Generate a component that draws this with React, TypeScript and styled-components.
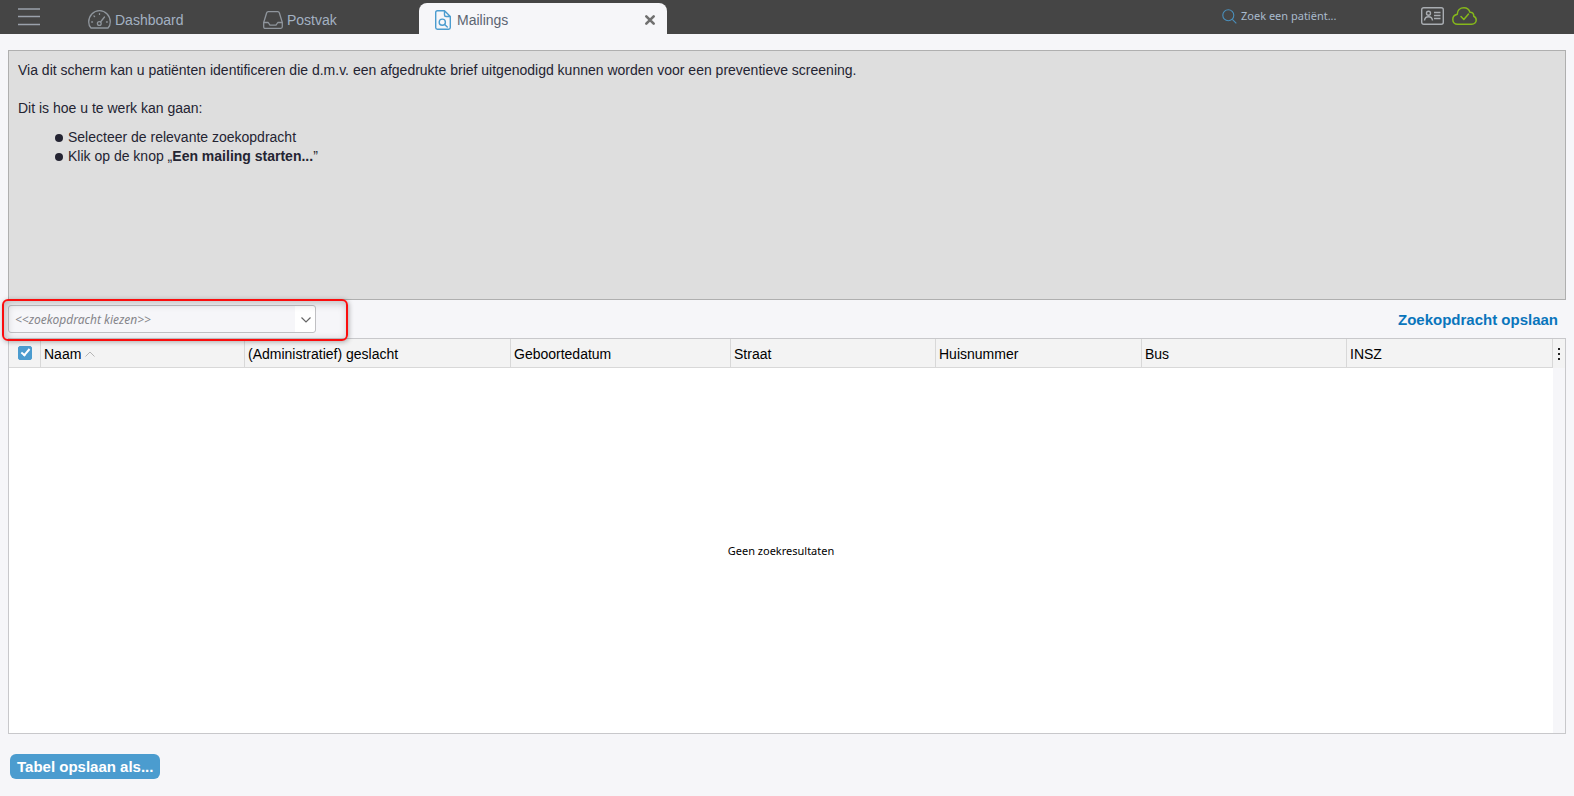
import React, { useState } from "react";
import styled, { createGlobalStyle, css } from "styled-components";

const sans = '"Liberation Sans", Arial, sans-serif';
const humanist = '"Noto Sans", "Segoe UI", sans-serif';

const GlobalStyle = createGlobalStyle`
  *, *::before, *::after { box-sizing: border-box; }
  body { margin: 0; background: #f6f6f9; font-family: ${sans}; }
  button, input, select { font: inherit; color: inherit; margin: 0; }
`;

const Page = styled.div`
  min-height: 100vh;
  display: flex;
  flex-direction: column;
`;

const TopBar = styled.header`
  height: 34px;
  display: flex;
  align-items: flex-start;
  background: #454545;
  padding-left: 18px;
`;

const BareButton = styled.button`
  display: flex;
  padding: 0;
  border: 0;
  background: none;
  cursor: pointer;
`;

const MenuButton = styled(BareButton)`
  padding-top: 8px;
  color: #9aa1ab;
`;

const Tabs = styled.nav`
  display: flex;
  align-self: stretch;
  align-items: flex-end;
  padding-left: 29px;
`;

const Tab = styled.div<{ $active?: boolean }>`
  display: flex;
  align-items: center;
  justify-content: space-between;
  height: 31px;
  width: 175px;
  padding: 2px 0 0 19px;
  color: #a3b1c2;
  ${(p) =>
    p.$active &&
    css`
      width: 248px;
      padding: 2px 11px 0 16px;
      border-radius: 8px 8px 0 0;
      background: #f6f6f9;
      color: #5b6472;
    `}
`;

const TabLink = styled.a<{ $gap: number }>`
  display: flex;
  align-items: center;
  gap: ${(p) => p.$gap}px;
  color: inherit;
  font-size: 14px;
  line-height: 20px;
  text-decoration: none;
`;

const Tools = styled.div`
  display: flex;
  gap: 8px;
  margin-left: auto;
  padding: 7px 97px 0 0;
`;

const Search = styled.label`
  display: flex;
  align-items: center;
  gap: 4px;
  width: 191px;
  height: 18px;
  color: #4a90bd;
`;

const SearchInput = styled.input`
  flex: 1;
  min-width: 0;
  padding: 0;
  border: 0;
  outline: 0;
  background: none;
  font-family: ${humanist};
  font-size: 11px;
  line-height: 18px;
  color: #a9bacd;
  &::placeholder { color: #a9bacd; opacity: 1; }
`;

const Content = styled.main`
  flex: 1;
  display: flex;
  flex-direction: column;
  padding: 16px 8px 17px;
`;

const Info = styled.section`
  min-height: 250px;
  padding: 10px 9px;
  border: 1px solid #afafaf;
  background: #dedede;
  color: #242432;
  font-size: 14px;
  line-height: 19px;
`;

const Paragraph = styled.p`
  margin: 0 0 19px;
`;

const Steps = styled.ul`
  margin: -9px 0 0;
  padding: 0 0 0 37px;
  list-style: none;
`;

const Step = styled.li`
  display: flex;
  align-items: center;
  gap: 5px;
  &::before {
    content: "";
    width: 8px;
    height: 8px;
    border-radius: 50%;
    background: #242432;
  }
`;

const QueryBar = styled.div`
  display: flex;
  align-items: center;
  justify-content: space-between;
  height: 38px;
  padding-right: 8px;
`;

const Picker = styled.div`
  position: relative;
  width: 308px;
  height: 28px;
`;

const Highlight = styled.div`
  position: absolute;
  inset: -6px -32px -8px -6px;
  border: 2px solid #fb0d0d;
  border-radius: 6px;
  box-shadow: 1px 1px 5px rgba(0, 0, 0, 0.3), inset 2px 2px 8px rgba(0, 0, 0, 0.25);
  pointer-events: none;
  z-index: 1;
`;

const Select = styled.select`
  appearance: none;
  width: 100%;
  height: 100%;
  padding: 0 28px 0 6px;
  border: 1px solid #c0c0c3;
  border-radius: 3px;
  background: linear-gradient(#fff, #fff) right / 20px 100% no-repeat #f6f6f9;
  color: #85858a;
  font-family: ${humanist};
  font-size: 12px;
  font-style: italic;
`;

const SelectArrow = styled.svg`
  position: absolute;
  top: 12px;
  right: 5px;
  pointer-events: none;
`;

const SaveQuery = styled(BareButton)`
  padding-top: 2px;
  color: #0a75bc;
  font-size: 15px;
  font-weight: bold;
  line-height: 20px;
`;

const TableFrame = styled.div`
  flex: 1;
  display: grid;
  grid-template-columns: minmax(0, 1fr) 12px;
  min-height: 396px;
  border: 1px solid #c8c8cb;
  background: #fff;
`;

const Table = styled.table`
  width: 100%;
  height: 100%;
  table-layout: fixed;
  border-collapse: separate;
  border-spacing: 0;
`;

const HeadCell = styled.th<{ $center?: boolean }>`
  height: 29px;
  padding: ${(p) => (p.$center ? "0" : "2px 3px 0")};
  border-right: 1px solid #d8d8d8;
  border-bottom: 1px solid #d8d8d8;
  background: #f3f3f3;
  color: #000;
  font-size: 14px;
  font-weight: normal;
  line-height: 20px;
  text-align: left;
  white-space: nowrap;
`;

const SortLabel = styled.span`
  display: flex;
  align-items: center;
  gap: 4px;
`;

const Checkbox = styled.input`
  appearance: none;
  display: block;
  width: 14px;
  height: 14px;
  margin: 0 0 0 9px;
  border-radius: 2px;
  border: 1px solid #4b9ccf;
  background: #fff;
  &:checked {
    background: #4b9ccf;
  }
  &:checked::after {
    content: "";
    display: block;
    width: 5px;
    height: 9px;
    margin: 0 0 0 4px;
    border: solid #fff;
    border-width: 0 2px 2px 0;
    transform: rotate(40deg);
  }
`;

const EmptyCell = styled.td`
  padding: 0;
  font-family: ${humanist};
  font-size: 11px;
  line-height: 16px;
  text-align: center;
  color: #000;
`;

const Gutter = styled.div`
  background: #f6f6f9;
`;

const ColumnMenu = styled(BareButton)`
  width: 100%;
  height: 29px;
  align-items: center;
  justify-content: center;
  background: #f3f3f3;
`;

const Footer = styled.footer`
  display: flex;
  padding: 20px 2px 0;
`;

const PrimaryButton = styled.button`
  height: 25px;
  padding: 0 7px;
  border: 0;
  border-radius: 6px;
  background: #4b9ccf;
  color: #fff;
  font-family: ${sans};
  font-size: 15px;
  font-weight: bold;
  line-height: 25px;
  cursor: pointer;
`;

const MenuIcon = () => (
  <svg width="22" height="18" viewBox="0 0 22 18" fill="none" stroke="currentColor" strokeWidth="1.6">
    <path d="M0 1h22M0 8.5h22M0 16.5h22" />
  </svg>
);

const GaugeIcon = () => (
  <svg width="23" height="19" viewBox="0 0 23 19" fill="none" stroke="#8f959c" strokeWidth="1.3" strokeLinecap="round">
    <path d="M3 18C1.4 16.300.7 14.200.7 12A10.800 11.300 0 0 1 22.300 12C22.300 14.200 21.600 16.300 20 18Z" strokeLinejoin="round" />
    <circle cx="11.300" cy="13.500" r="1.900" />
    <path d="M12.500 12l4-5M11.500 3.600v.8M6 6l.6.600M3.700 12h.8M18.500 12h.8" />
  </svg>
);

const TrayIcon = () => (
  <svg width="20" height="18" viewBox="0 0 20 18" fill="none" stroke="#8f959c" strokeWidth="1.3" strokeLinejoin="round">
    <path d="M.7 11.500L3.600 2Q4 .7 5.200.7h9.600q1.200 0 1.600 1.300l2.900 9.500v4.300q0 1.500-1.500 1.500H2.200q-1.500 0-1.500-1.500z" />
    <path d="M.7 11.500h4.500l1.800 2.600h6l1.800-2.600h4.500" />
  </svg>
);

const MailingIcon = () => (
  <svg width="16" height="20" viewBox="0 0 16 20" fill="none" stroke="#4b9ccf" strokeWidth="1.400" strokeLinejoin="round" strokeLinecap="round">
    <path d="M9.500.7H2.400Q.7.700.7 2.400v15.200q0 1.700 1.700 1.700h11.200q1.700 0 1.700-1.700V6.500zM9.500.7v4.300q0 1.500 1.500 1.500h4.300" />
    <circle cx="7.300" cy="12.200" r="3.100" />
    <path d="M9.600 14.400l2.700 2.700" />
  </svg>
);

const CloseIcon = () => (
  <svg width="12" height="12" viewBox="0 0 12 12" stroke="#707070" strokeWidth="2.600" strokeLinecap="round">
    <path d="M2.300 2.300l7.400 7.400M9.700 2.300l-7.400 7.400" />
  </svg>
);

const SearchIcon = () => (
  <svg width="15" height="15" viewBox="0 0 15 15" fill="none" stroke="currentColor" strokeWidth="1.100">
    <circle cx="6.300" cy="6.300" r="5.500" />
    <path d="M10.300 10.300l4 4" />
  </svg>
);

const CardIcon = () => (
  <svg width="23" height="18" viewBox="0 0 23 18" fill="none" stroke="#a9adb2" strokeWidth="1.400">
    <rect x=".7" y=".7" width="21.600" height="16.600" rx="2" />
    <circle cx="7.500" cy="6.300" r="2" />
    <path d="M3.500 13.500c.3-2.700 1.900-3.800 4-3.800s3.700 1.100 4 3.800M13 5.500h6.500M13 8.500h6.500M13 11.500h6.500" />
  </svg>
);

const CloudIcon = () => (
  <svg width="25" height="18" viewBox="0 0 25 18" fill="none" stroke="#86b81b" strokeWidth="1.500" strokeLinejoin="round" strokeLinecap="round">
    <path d="M5.500 17.200h14.200c2.600 0 4.500-1.800 4.500-4.200 0-1.800-.9-3.100-2.500-3.800.3-2.400-1.300-4.100-3.700-3.900C17 2.500 14.800.8 12 .8 8 .8 5.300 3.500 5.300 7.300 2.500 8 .8 9.800.8 12.400c0 2.800 2 4.800 4.700 4.800z" />
    <path d="M9 9.600l2.800 2.900 4.700-5.500" />
  </svg>
);

const DotsIcon = () => (
  <svg width="2" height="12" viewBox="0 0 2 12" fill="#222">
    <path d="M0 0h2v2H0zM0 5h2v2H0zM0 10h2v2H0z" />
  </svg>
);

const columns = [
  { label: "Naam", width: 204, sorted: true },
  { label: "(Administratief) geslacht", width: 266 },
  { label: "Geboortedatum", width: 220 },
  { label: "Straat", width: 205 },
  { label: "Huisnummer", width: 206 },
  { label: "Bus", width: 205 },
  { label: "INSZ", width: 206 },
];

export default function App() {
  const [allSelected, setAllSelected] = useState(true);
  return (
    <Page>
      <GlobalStyle />
      <TopBar>
        <MenuButton aria-label="Menu"><MenuIcon /></MenuButton>
        <Tabs>
          <Tab><TabLink href="#dashboard" $gap={4}><GaugeIcon />Dashboard</TabLink></Tab>
          <Tab><TabLink href="#postvak" $gap={4}><TrayIcon />Postvak</TabLink></Tab>
          <Tab $active>
            <TabLink href="#mailings" $gap={6} aria-current="page"><MailingIcon />Mailings</TabLink>
            <BareButton aria-label="Sluiten"><CloseIcon /></BareButton>
          </Tab>
        </Tabs>
        <Tools>
          <Search>
            <SearchIcon />
            <SearchInput type="text" aria-label="Zoek een patiënt" placeholder="Zoek een patiënt..." />
          </Search>
          <BareButton aria-label="Identiteitskaart"><CardIcon /></BareButton>
          <BareButton aria-label="Verbonden"><CloudIcon /></BareButton>
        </Tools>
      </TopBar>
      <Content>
        <Info>
          <Paragraph>
            Via dit scherm kan u patiënten identificeren die d.m.v. een afgedrukte brief uitgenodigd kunnen worden voor een preventieve screening.
          </Paragraph>
          <Paragraph>Dit is hoe u te werk kan gaan:</Paragraph>
          <Steps>
            <Step>Selecteer de relevante zoekopdracht</Step>
            <Step><span>Klik op de knop „<b>Een mailing starten...</b>”</span></Step>
          </Steps>
        </Info>
        <QueryBar>
          <Picker>
            <Select aria-label="Zoekopdracht" defaultValue="">
              <option value="">{"<<zoekopdracht kiezen>>"}</option>
            </Select>
            <SelectArrow width="10" height="6" viewBox="0 0 10 6" fill="none" stroke="#666" strokeWidth="1.200">
              <path d="M.5.5L5 5 9.500.5" />
            </SelectArrow>
            <Highlight />
          </Picker>
          <SaveQuery>Zoekopdracht opslaan</SaveQuery>
        </QueryBar>
        <TableFrame>
          <Table>
            <colgroup>
              <col width={32} />
              {columns.map((c) => <col key={c.label} width={c.width} />)}
            </colgroup>
            <thead>
              <tr>
                <HeadCell $center>
                  <Checkbox
                    type="checkbox"
                    aria-label="Alles selecteren"
                    checked={allSelected}
                    onChange={(e) => setAllSelected(e.target.checked)}
                  />
                </HeadCell>
                {columns.map((c) => (
                  <HeadCell key={c.label} scope="col" aria-sort={c.sorted ? "ascending" : undefined}>
                    <SortLabel>
                      {c.label}
                      {c.sorted && (
                        <svg width="10" height="6" viewBox="0 0 10 6" fill="none" stroke="#b5b5b5">
                          <path d="M.5 5.500L5 1l4.500 4.500" />
                        </svg>
                      )}
                    </SortLabel>
                  </HeadCell>
                ))}
              </tr>
            </thead>
            <tbody>
              <tr><EmptyCell colSpan={8}>Geen zoekresultaten</EmptyCell></tr>
            </tbody>
          </Table>
          <Gutter>
            <ColumnMenu aria-label="Kolommen"><DotsIcon /></ColumnMenu>
          </Gutter>
        </TableFrame>
        <Footer>
          <PrimaryButton>Tabel opslaan als...</PrimaryButton>
        </Footer>
      </Content>
    </Page>
  );
}
